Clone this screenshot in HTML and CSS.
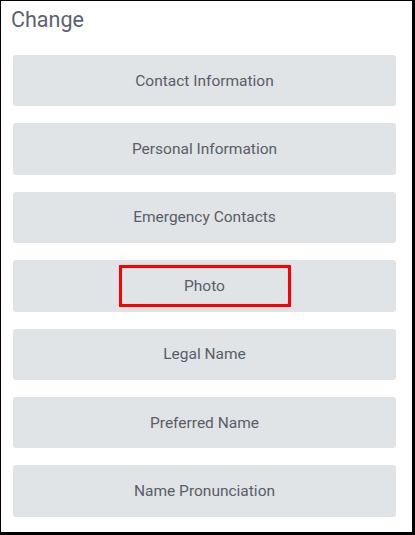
FILE: index.html
```html
<!DOCTYPE html>
<html lang="en">
<head>
    <meta charset="UTF-8">
    <meta name="viewport" content="width=device-width, initial-scale=1.0">
    <title>Change</title>
    <link rel="stylesheet" href="styles.css">
</head>
<body>

    <div class="panel">
        <h1>Change</h1>

        <!-- Change options -->
        <div class="options">
            <button class="option">Contact Information</button>
            <button class="option">Personal Information</button>
            <button class="option">Emergency Contacts</button>
            <button class="option"><span class="highlight">Photo</span></button>
            <button class="option">Legal Name</button>
            <button class="option">Preferred Name</button>
            <button class="option">Name Pronunciation</button>
        </div>
    </div>

</body>
</html>
```

FILE: styles.css
```css
* {
    box-sizing: border-box;
}
html, body {
    margin: 0;
    padding: 0;
}
body {
    font-family: Roboto, "Liberation Sans", Arial, sans-serif;
    background: #fff;
}
.panel {
    width: 415px;
    height: 535px;
    border-style: solid;
    border-color: #000;
    border-width: 1px 3px 3px 1px;
    padding: 0 16px 0 12px;
}
.panel h1 {
    margin: 0 0 0 -2px;
    padding-top: 8px;
    font-size: 21.5px;
    line-height: 22px;
    font-weight: 400;
    color: #5b6270;
}
.options {
    display: flex;
    flex-direction: column;
    gap: 17px;
    margin-top: 24px;
}
.option {
    height: 51.4px;
    border: none;
    border-radius: 3px;
    background: #e1e4e7;
    color: #595d66;
    font-family: inherit;
    font-size: 15.5px;
    display: flex;
    align-items: center;
    justify-content: center;
    cursor: pointer;
}
.option:hover {
    background: #d6dadd;
}
.highlight {
    width: 172px;
    height: 42px;
    border: 3px solid #ff0000;
    display: flex;
    align-items: center;
    justify-content: center;
}
```
